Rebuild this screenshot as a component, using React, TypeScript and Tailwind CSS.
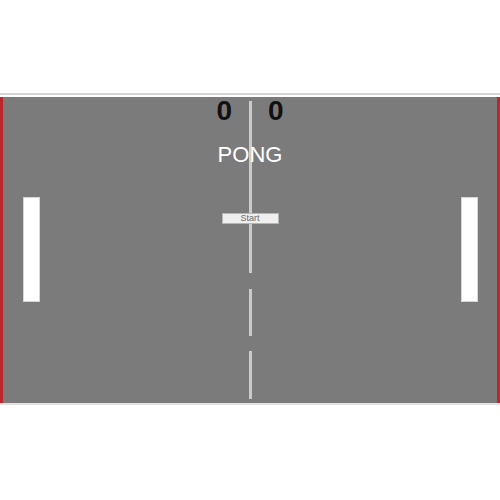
const dashes = [
  { top: 4, height: 172 },
  { top: 192, height: 47 },
  { top: 254, height: 48 }
];

export default function App() {
  return (
    <div className="h-[500px] w-[500px] bg-white pt-[93px] font-['Liberation_Sans',Arial,sans-serif]">
      <div className="h-[2px] bg-[#d4d4d4]" />
      <div className="h-[2px] bg-white" />
      <div className="relative h-[306px] border-x-[3px] border-[#b9272c] bg-[#7b7b7b]">
        {dashes.map((d) => (
          <div
            key={d.top}
            className="absolute left-[246px] w-[3px] bg-[#cbcbcb]"
            style={{ top: d.top, height: d.height }}
          />
        ))}
        <div className="absolute left-[20px] top-[100px] h-[105px] w-[17px] border border-[#d6d6d6] bg-white" />
        <div className="absolute left-[458px] top-[100px] h-[105px] w-[17px] border border-[#d6d6d6] bg-white" />
        <div className="relative flex flex-col items-center">
          <div className="flex gap-[36px] text-[28px] font-bold leading-[28px] text-[#111]">
            <span>0</span>
            <span>0</span>
          </div>
          <div className="mt-[19px] text-[22px] leading-[22px] text-white">PONG</div>
          <button className="mt-[47px] flex h-[11px] w-[57px] items-center justify-center border border-[#b5b5b5] bg-[#efefef] text-[9px] leading-none text-[#6a6a6a]">
            Start
          </button>
        </div>
      </div>
      <div className="h-[2px] bg-[#e2e2e2]" />
    </div>
  );
}
